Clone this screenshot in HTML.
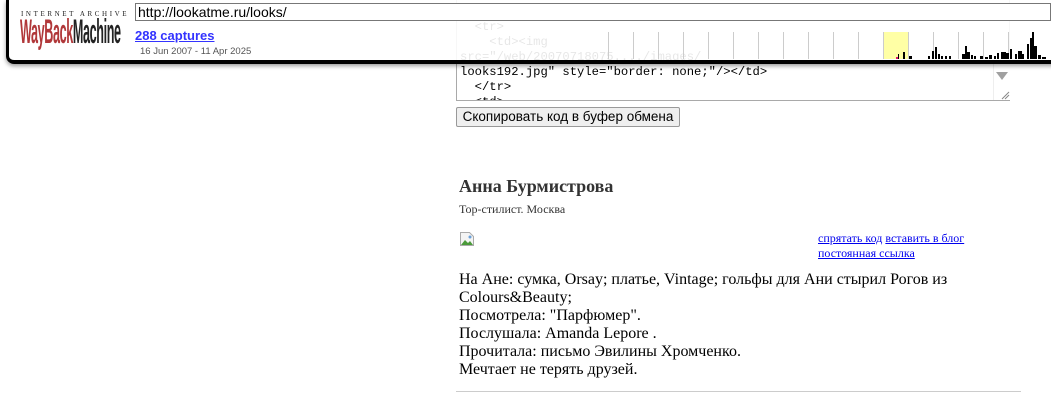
<!DOCTYPE html>
<html><head><meta charset="utf-8"><style>
body{margin:0;width:1051px;height:402px;overflow:hidden;background:#fff;position:relative;font-family:"Liberation Serif",serif}
.a{position:absolute}
#ta{left:456px;top:-20px;width:554px;height:121px;border:1px solid #a9a9a9;font:12.2px/15px "Liberation Mono","DejaVu Sans Mono",monospace;white-space:pre;color:#000;overflow:hidden;padding:9px 3px 0;box-sizing:border-box;background:#fff}
#tb{left:0;top:0;width:1051px;height:60px;background:rgba(255,255,255,0.9);}
#bb{left:6px;top:0;width:1060px;height:60px;border-left:3px solid #000;border-bottom:4px solid #000;border-bottom-left-radius:8px;box-shadow:0 2px 4px rgba(0,0,0,.4)}
a{color:#00e}
</style></head><body>
<div id="ta" class="a">&lt;a href="/web/2007.." rel="nofollow"&gt;
ssylka: Fotografiya Anny Burmistrovoy
  &lt;tr&gt;
    &lt;td&gt;&lt;img
src="/web/20070718075..../images/
looks192.jpg" style="border: none;"/&gt;&lt;/td&gt;
  &lt;/tr&gt;
  &lt;td&gt;</div>
<div class="a" style="left:993px;top:61px;width:16px;height:39px;background:#fff;border-left:1px solid #eee"></div>
<div class="a" style="left:996px;top:72px;width:0;height:0;border-left:6px solid transparent;border-right:6px solid transparent;border-top:8px solid #a0a0a0"></div>
<svg class="a" style="left:1000px;top:90px" width="10" height="10"><path d="M2 9L9 2M5 9L9 5" stroke="#888"/></svg>
<div class="a" style="left:456px;top:107px;width:224px;height:20px;border:1px solid #999;border-radius:2px;background:#efefef;box-sizing:border-box;font:13.5px/18px 'Liberation Sans',sans-serif;text-align:center">Скопировать код в буфер обмена</div>

<div id="tb" class="a"></div>
<div id="bb" class="a"></div>
<div class="a" style="left:21px;top:10px;font:7px 'Liberation Serif',serif;letter-spacing:2.6px;color:#222;white-space:nowrap">INTERNET ARCHIVE</div>
<div class="a" style="left:20px;top:17px;font:bold 34px/30px 'Liberation Sans',sans-serif;transform:scaleX(.37);transform-origin:0 0;letter-spacing:-1px;white-space:nowrap"><span style="color:#b1383a">WayBack</span><span style="color:#222">Machine</span></div>
<div class="a" style="left:135px;top:3px;width:916px;height:18px;border:1px solid #777;box-sizing:border-box;background:#fff;font:14px/16px 'Liberation Sans',sans-serif;padding-left:2px">http://lookatme.ru/looks/</div>
<div class="a" style="left:135px;top:28px;font:bold 13px 'Liberation Sans',sans-serif"><a href="#" style="color:#33f">288 captures</a></div>
<div class="a" style="left:140px;top:46px;font:9.5px 'Liberation Sans',sans-serif;color:#555">16 Jun 2007 - 11 Apr 2025</div>
<svg class="a" style="left:600px;top:32px" width="451" height="27">
<rect x="283" y="0" width="25" height="27" fill="#ffffa5"/>
<g stroke="#ccc" stroke-width="1">
<line x1="8.5" y1="0" x2="8.5" y2="27"/><line x1="33.5" y1="0" x2="33.5" y2="27"/><line x1="58.5" y1="0" x2="58.5" y2="27"/><line x1="83.5" y1="0" x2="83.5" y2="27"/><line x1="108.5" y1="0" x2="108.5" y2="27"/><line x1="133.5" y1="0" x2="133.5" y2="27"/><line x1="158.5" y1="0" x2="158.5" y2="27"/><line x1="183.5" y1="0" x2="183.5" y2="27"/><line x1="208.5" y1="0" x2="208.5" y2="27"/><line x1="233.5" y1="0" x2="233.5" y2="27"/><line x1="258.5" y1="0" x2="258.5" y2="27"/><line x1="283.5" y1="0" x2="283.5" y2="27"/><line x1="308.5" y1="0" x2="308.5" y2="27"/><line x1="333.5" y1="0" x2="333.5" y2="27"/><line x1="358.5" y1="0" x2="358.5" y2="27"/><line x1="383.5" y1="0" x2="383.5" y2="27"/><line x1="408.5" y1="0" x2="408.5" y2="27"/><line x1="433.5" y1="0" x2="433.5" y2="27"/></g>
<g fill="#000">
<rect x="296" y="25" width="2" height="2" fill="#e0116b"/><rect x="298" y="22" width="1" height="5"/><rect x="303" y="20" width="2" height="7"/><rect x="309" y="24" width="3" height="3"/>
<rect x="328" y="24" width="2" height="3"/><rect x="332" y="19" width="2" height="8"/><rect x="335" y="15" width="2" height="12"/><rect x="338" y="22" width="2" height="5"/><rect x="341" y="24" width="2" height="3"/><rect x="345" y="24" width="2" height="3"/><rect x="349" y="24" width="2" height="3"/>
<rect x="362" y="22" width="3" height="5"/><rect x="365" y="14" width="2" height="13"/><rect x="367" y="20" width="3" height="7"/><rect x="371" y="23" width="2" height="4"/><rect x="374" y="24" width="2" height="3"/>
<rect x="380" y="24" width="3" height="3"/><rect x="385" y="25" width="3" height="2"/><rect x="389" y="23" width="3" height="4"/><rect x="394" y="24" width="2" height="3"/><rect x="397" y="21" width="2" height="6"/><rect x="401" y="20" width="5" height="7"/><rect x="406" y="21" width="3" height="6"/><rect x="410" y="17" width="2" height="10"/><rect x="415" y="22" width="2" height="5"/><rect x="418" y="19" width="4" height="8"/><rect x="422" y="22" width="2" height="5"/><rect x="427" y="12" width="2" height="15"/><rect x="430" y="6" width="2" height="21"/><rect x="432" y="0" width="2" height="27"/><rect x="434" y="14" width="3" height="13"/><rect x="438" y="23" width="3" height="4"/><rect x="442" y="25" width="4" height="2"/></g>
</svg>

<div class="a" style="left:459px;top:176px;font:bold 18px 'Liberation Serif',serif;color:#333">Анна Бурмистрова</div>
<div class="a" style="left:459px;top:202px;font:12px 'Liberation Serif',serif;color:#333">Top-стилист. Москва</div>
<svg class="a" style="left:459px;top:231px" width="16" height="16"><path d="M1.5 1.5h9l4 4v9h-13z" fill="#f4f4f4" stroke="#aaa"/><path d="M2 14l4-5 3 3 2-2 3 4z" fill="#4a9a3a"/><circle cx="11" cy="6" r="1.5" fill="#6aa0d8"/></svg>
<div class="a" style="left:818px;top:231px;font:12px/15px 'Liberation Serif',serif"><a href="#">спрятать код</a> <a href="#">вставить в блог</a><br><a href="#">постоянная ссылка</a></div>
<div class="a" style="left:459px;top:271px;width:540px;font:16px/18px 'Liberation Serif',serif;color:#000">На Ане: сумка, Orsay; платье, Vintage; гольфы для Ани стырил Рогов из Colours&amp;Beauty;<br>Посмотрела: "Парфюмер".<br>Послушала: Amanda Lepore .<br>Прочитала: письмо Эвилины Хромченко.<br>Мечтает не терять друзей.</div>
<div class="a" style="left:456px;top:391px;width:565px;height:1px;background:#ccc"></div>
</body></html>
